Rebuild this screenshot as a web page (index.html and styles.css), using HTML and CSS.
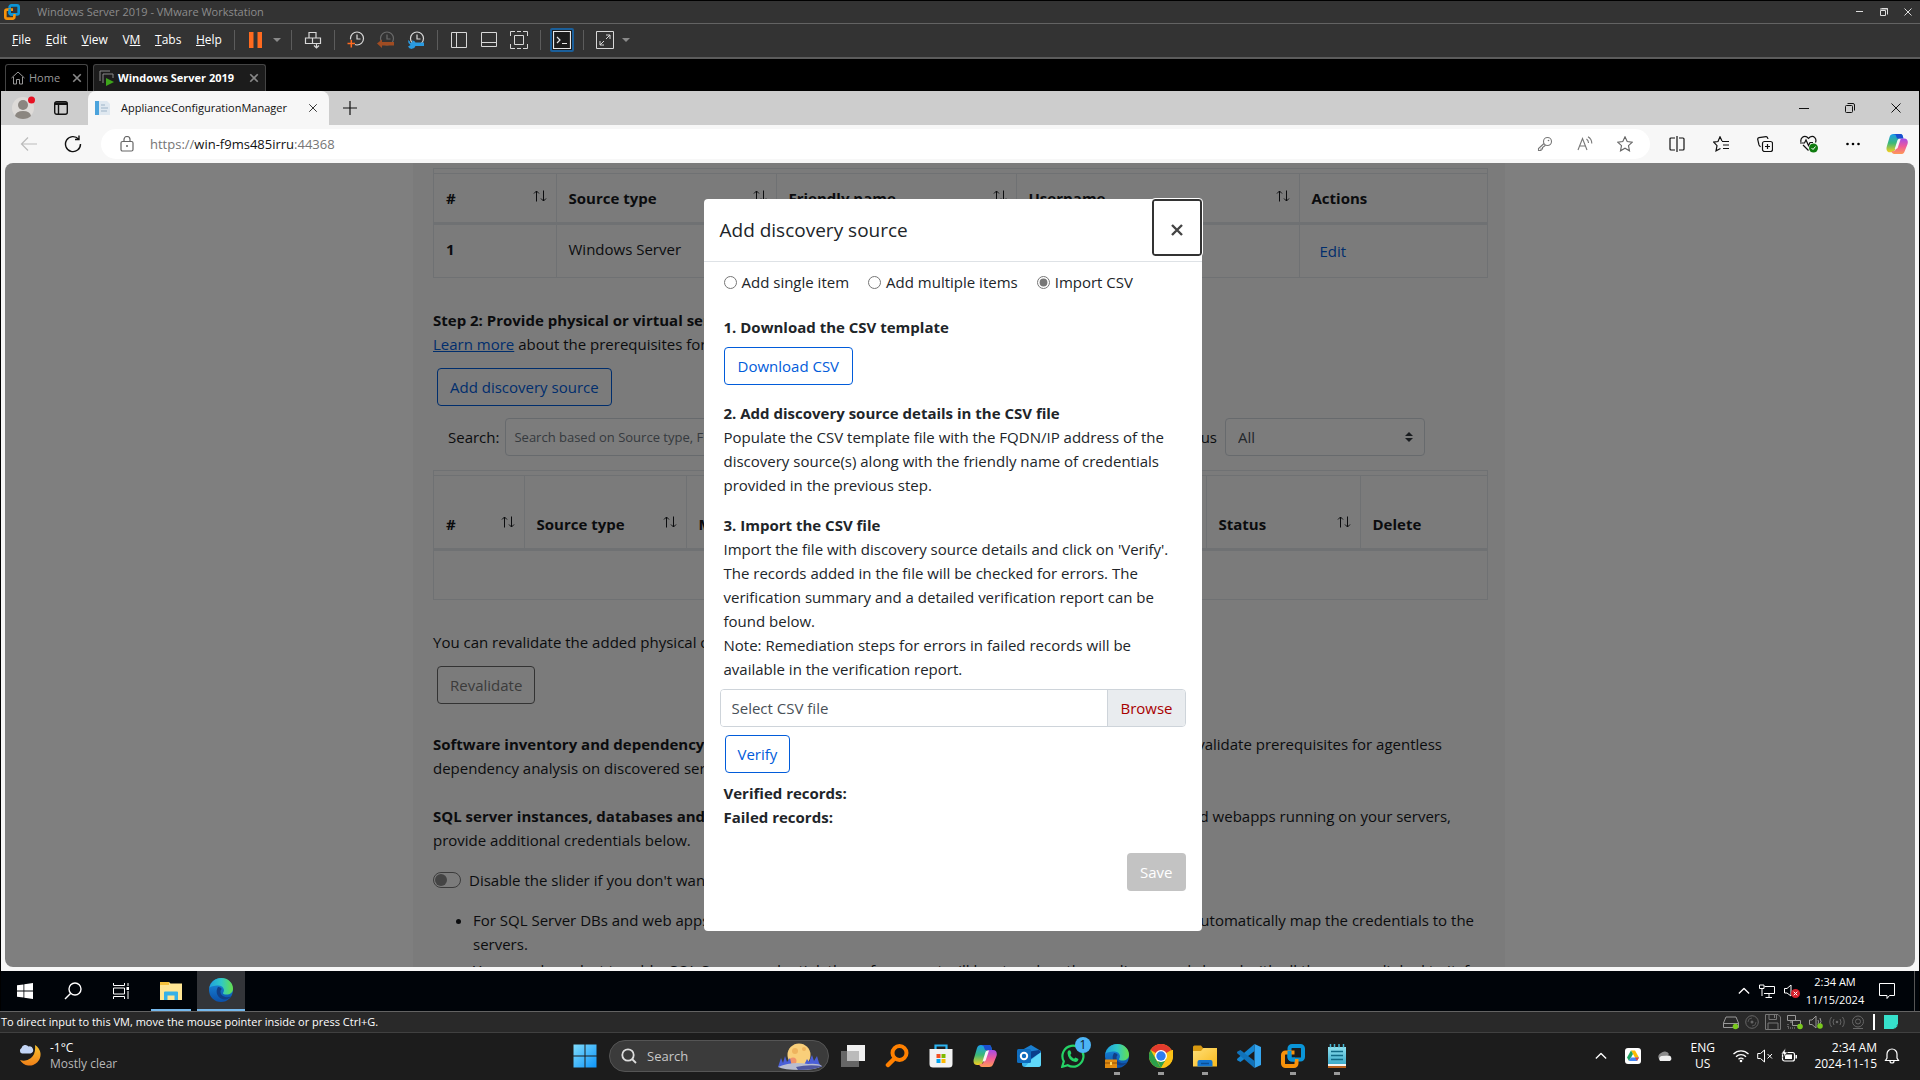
FILE: index.html
```html
<!DOCTYPE html>
<html lang="en">
<head>
<meta charset="utf-8">
<title>Windows Server 2019 - VMware Workstation</title>
<link rel="stylesheet" href="styles.css">
</head>
<body>
<svg class="defs" aria-hidden="true">
  <defs>
    <linearGradient id="edge-a" x1="0" y1="0" x2="1" y2="0"><stop offset="0" stop-color="#1fa0dc"/><stop offset=".5" stop-color="#2fc8c8"/><stop offset="1" stop-color="#66e04a"/></linearGradient>
    <linearGradient id="edge-b" x1="0" y1="0" x2="0" y2="1"><stop offset="0" stop-color="#1b8fe0"/><stop offset="1" stop-color="#0b4fa8"/></linearGradient>
    <linearGradient id="cop-a" x1="0" y1="0" x2="0" y2="1"><stop offset="0" stop-color="#1a9df0"/><stop offset=".5" stop-color="#3cb878"/><stop offset="1" stop-color="#f5d020"/></linearGradient>
    <linearGradient id="cop-b" x1="0" y1="0" x2="0" y2="1"><stop offset="0" stop-color="#a44be8"/><stop offset=".5" stop-color="#ee5a9a"/><stop offset="1" stop-color="#ff9a56"/></linearGradient>
    <linearGradient id="win" x1="0" y1="0" x2="1" y2="1"><stop offset="0" stop-color="#7fdcfc"/><stop offset="1" stop-color="#0d94f8"/></linearGradient>
    <linearGradient id="moon" x1="0" y1="0" x2="0" y2="1"><stop offset="0" stop-color="#f9c32e"/><stop offset="1" stop-color="#f08018"/></linearGradient>
    <linearGradient id="folder" x1="0" y1="0" x2="1" y2="1"><stop offset="0" stop-color="#ffdf78"/><stop offset="1" stop-color="#f8b91c"/></linearGradient>
    <linearGradient id="note" x1="0" y1="0" x2="0" y2="1"><stop offset="0" stop-color="#8fe0ee"/><stop offset="1" stop-color="#38a8c8"/></linearGradient>
    <symbol id="sort" viewBox="0 0 14 12"><path d="M3.500 11.500V1M1 3.500L3.500 1L6 3.500M10.500 .5V11M8 8.500L10.500 11L13 8.500" fill="none" stroke="currentColor"/></symbol>
    <symbol id="vmware" viewBox="0 0 24 24"><rect x="8.500" y="2" width="13.500" height="13.500" rx="2.500" fill="none" stroke="#0a95d8" stroke-width="4"/><path d="M13.500 8.500H4.500A2.500 2.500 0 0 0 2 11V19.500A2.500 2.500 0 0 0 4.500 22H13A2.500 2.500 0 0 0 15.500 19.500V15" fill="none" stroke="#f8920a" stroke-width="4"/><path d="M8.500 7V13A2.500 2.500 0 0 0 11 15.500H14" fill="none" stroke="#0a95d8" stroke-width="4"/></symbol>
    <symbol id="edge" viewBox="0 0 24 24"><circle cx="12" cy="12" r="12" fill="url(#edge-b)"/><path d="M.3 10C1.500 4 6.500 0 12.500 0C19 0 24 5 24 10.500C24 14.500 21 16.500 17.500 16.500C15 16.500 13.500 15.800 14 15C16.500 12 14 7.500 9.500 7.500C5 7.500 1.200 8.500.3 10Z" fill="url(#edge-a)"/><path d="M9 9C6.500 12.500 7.500 18 12 20.500C16 22.500 20 21 22 18.500C19 20 12 19.500 11.500 14C11.400 12.500 12 11.500 12.800 11C12 9.500 10.500 8.800 9 9Z" fill="#123f86"/></symbol>
    <symbol id="copilot" viewBox="0 0 24 24"><path d="M8 1H16C17.500 1 18 2 18.500 4L19 6H14L10 18C9.300 20 8 21 6 21H4C1 21 0 18 .8 15L4 4C4.600 2 6 1 8 1Z" fill="url(#cop-a)"/><path d="M8 1H16C17.500 1 18 2 18.500 4L19 6H12L10.500 2Z" fill="#1b4fd0"/><path d="M14.500 6H20C23 6 24.500 8.500 23.500 12L20.500 19.500C19.600 22 18.500 23 16 23H9C7.500 23 6.500 22 6 20H8C9.500 20 10.300 19 11 17L14.500 6Z" fill="url(#cop-b)"/><path d="M14.500 6.500H16L12.800 16C12.500 17 11.500 17.500 9.500 17.500L12.500 8Q13 6.500 14.500 6.500Z" fill="#f6f6f6"/></symbol>
    <symbol id="clock" viewBox="0 0 18 18"><circle cx="10" cy="7.500" r="6.500" fill="none" stroke="currentColor" stroke-width="1.200"/><path d="M10 3.500V8H13.500" fill="none" stroke="currentColor" stroke-width="1.200"/></symbol>
    <symbol id="cross" viewBox="0 0 12 12"><path d="M1.500 1.500L10.500 10.500M10.500 1.500L1.500 10.500" fill="none" stroke="currentColor"/></symbol>
    <symbol id="crossbold" viewBox="0 0 12 12"><path d="M1.500 1.500L10.500 10.500M10.500 1.500L1.500 10.500" fill="none" stroke="currentColor" stroke-width="2"/></symbol>
    <symbol id="chev" viewBox="0 0 14 8"><path d="M1 7L7 1L13 7" fill="none" stroke="currentColor" stroke-width="1.500"/></symbol>
  </defs>
</svg>

<header class="titlebar">
  <svg class="i16" viewBox="0 0 24 24"><use href="#vmware"/></svg>
  <span class="titlebar-text">Windows Server 2019 - VMware Workstation</span>
  <button aria-label="Minimize"><svg class="i8" viewBox="0 0 8 8"><path d="M0 3.500H7" stroke="#ddd"/></svg></button>
  <button aria-label="Restore"><svg class="i8" viewBox="0 0 8 8"><path d="M.5 2.500H5.500V7.500H.5ZM1.500 .5H7.500V6.500" fill="none" stroke="#ddd"/><path d="M0 1H8" stroke="#ddd"/></svg></button>
  <button aria-label="Close"><svg class="i8" viewBox="0 0 8 8"><path d="M.5 .5L7.500 7.500M7.500 .5L.5 7.500" stroke="#ddd"/></svg></button>
</header>

<div class="menubar">
  <nav class="menus">
    <a href="#"><u>F</u>ile</a><a href="#"><u>E</u>dit</a><a href="#"><u>V</u>iew</a><a href="#">V<u>M</u></a><a href="#"><u>T</u>abs</a><a href="#"><u>H</u>elp</a>
  </nav>
  <div class="tools">
    <button aria-label="Suspend"><svg class="i18" viewBox="0 0 18 18"><path d="M2 1H6.500V17H2ZM10.500 1H15V17H10.500Z" fill="#ff6a1f"/></svg></button>
    <button class="narrow" aria-label="Power menu"><svg class="i8" viewBox="0 0 8 8"><path d="M0 2H8L4 6Z" fill="#8a8a8a"/></svg></button>
  </div>
  <div class="tools">
    <button aria-label="Send Ctrl+Alt+Del"><svg class="i18" viewBox="0 0 18 18"><path d="M5 1.500H12V7H5ZM1.500 7H8.500V12.500H1.500ZM8.500 7H16.500V12.500H8.500ZM12.500 12.500V16.500M10 14.500L12.500 17L15 14.500" fill="none" stroke="#d8d8d8" stroke-width="1.200"/></svg></button>
  </div>
  <div class="tools">
    <button aria-label="Take snapshot"><svg class="i18 light" viewBox="0 0 18 18"><use href="#clock"/><path d="M1 12H8M4.500 8.500V16" stroke="#333" stroke-width="4"/><path d="M.5 12.500H8M4.300 9V16.500" stroke="#ff6a1f" stroke-width="1.500"/></svg></button>
    <button aria-label="Revert snapshot"><svg class="i18 faint" viewBox="0 0 18 18"><use href="#clock"/><path d="M0 12.500L5 8.500V11H17V14.500H5V17Z" fill="#a04c22"/></svg></button>
    <button aria-label="Manage snapshots"><svg class="i18 light" viewBox="0 0 18 18"><use href="#clock"/><path d="M1 9L3 10.500V12L5.500 11L5 9.500A3.500 3.500 0 0 1 8.500 11.500H17V15H8.500A4 4 0 0 1 1 15.500L3.500 14L1.500 12Z" fill="#2a9ae0"/></svg></button>
  </div>
  <div class="tools">
    <button aria-label="Show library"><svg class="i18" viewBox="0 0 18 18"><path d="M1.500 1.500H16.500V16.500H1.500ZM6.500 1.500V16.500" fill="none" stroke="#d8d8d8"/></svg></button>
    <button aria-label="Show thumbnail bar"><svg class="i18" viewBox="0 0 18 18"><path d="M1.500 1.500H16.500V15.500H1.500ZM1.500 11.500H16.500" fill="none" stroke="#d8d8d8"/></svg></button>
    <button aria-label="Full screen"><svg class="i18" viewBox="0 0 18 18"><path d="M4.500 4.500H13.500V13.500H4.500ZM.5 5V.5H5M7 .5H11M13 .5H17.500V5M17.500 13V17.500H13M11 17.500H7M5 17.500H.5V13" fill="none" stroke="#d8d8d8"/></svg></button>
  </div>
  <div class="tools">
    <button class="active" aria-label="Console view"><svg class="i18" viewBox="0 0 18 18"><path d="M.5 .5H17.500V17.500H.5ZM4 6L7 9L4 12M9 12.500H14" fill="none" stroke="#e8e8e8" stroke-width="1.200"/></svg></button>
  </div>
  <div class="tools">
    <button aria-label="Stretch guest"><svg class="i18" viewBox="0 0 18 18"><path d="M.5 .5H17.500V17.500H.5ZM10 4H14V8M14 4L10 8M4 10V14H8M4 14L8 10" fill="none" stroke="#d8d8d8"/></svg></button>
    <button class="narrow" aria-label="Stretch menu"><svg class="i8" viewBox="0 0 8 8"><path d="M0 2H8L4 6Z" fill="#8a8a8a"/></svg></button>
  </div>
</div>

<div class="vmtabs">
  <div class="vmtab home"><svg class="i14" viewBox="0 0 14 14"><path d="M.5 7L7 1L13.500 7M2.500 6V13H5.500V8.500H8.500V13H11.500V6" fill="none" stroke="#999"/></svg><span>Home</span><button aria-label="Close Home"><svg class="i10" viewBox="0 0 12 12"><use href="#crossbold"/></svg></button></div>
  <div class="vmtab current"><svg class="i16" viewBox="0 0 16 16"><path d="M1 11V1H11M4 13V4H14V8" fill="none" stroke="#888"/><path d="M7 8L15 12L7 16Z" fill="#3ea61b"/></svg><span>Windows Server 2019</span><button aria-label="Close tab"><svg class="i10" viewBox="0 0 12 12"><use href="#crossbold"/></svg></button></div>
</div>

<div class="guest">
  <div class="etabs">
    <button class="profile" aria-label="Profile"><svg class="i24" viewBox="0 0 24 24"><circle cx="12" cy="12" r="11" fill="#dedbd8"/><circle cx="12" cy="9" r="5" fill="#8b8680"/><path d="M4 20Q5 15 12 15T20 20Q17 23 12 23T4 20Z" fill="#8b8680"/><circle cx="20.500" cy="4" r="3.500" fill="#e81123"/></svg></button>
    <button class="workspace" aria-label="Tab actions"><svg class="i14" viewBox="0 0 14 14"><rect x=".7" y=".7" width="12.600" height="12.600" rx="2" fill="none" stroke="#111" stroke-width="1.400"/><path d="M1 2.500H13M4.500 3V13" stroke="#111" stroke-width="1.400"/><path d="M1 1.500H13V4H1Z" fill="#111"/></svg></button>
    <div class="etab"><svg class="i16" viewBox="0 0 16 16"><path d="M0 1H4V15H0Z" fill="#4ba3dc"/><path d="M4 1H12L15 4V15H4Z" fill="#dfe8f0"/><path d="M6 5H10M6 8H13M6 11H12" stroke="#9db4c8"/></svg><span>ApplianceConfigurationManager</span><button aria-label="Close tab"><svg class="i10" viewBox="0 0 12 12"><use href="#cross"/></svg></button></div>
    <button class="newtab" aria-label="New tab"><svg class="i14" viewBox="0 0 14 14"><path d="M7 0V14M0 7H14" stroke="#111" stroke-width="1.200"/></svg></button>
    <span class="grow"></span>
    <button class="ewin" aria-label="Minimize"><svg class="i10" viewBox="0 0 10 10"><path d="M0 5.500H10" stroke="#111"/></svg></button>
    <button class="ewin" aria-label="Restore"><svg class="i10" viewBox="0 0 10 10"><rect x=".5" y="2.500" width="7" height="7" rx="1" fill="none" stroke="#111"/><path d="M2.500 .5H8Q9.500 .5 9.500 2V7.500" fill="none" stroke="#111"/></svg></button>
    <button class="ewin" aria-label="Close"><svg class="i12" viewBox="0 0 12 12"><use href="#cross"/></svg></button>
  </div>
  <div class="address">
    <button class="nav faded" aria-label="Back"><svg class="i18" viewBox="0 0 18 18"><path d="M17 9H1.500M8 2.500L1.500 9L8 15.500" fill="none" stroke="currentColor" stroke-width="1.200"/></svg></button>
    <button class="nav" aria-label="Refresh"><svg class="i18" viewBox="0 0 18 18"><path d="M14.500 4A7.500 7.500 0 1 0 16.500 9M15 .5V4.500H11" fill="none" stroke="#111" stroke-width="1.400"/></svg></button>
    <div class="pill">
      <svg class="i16" viewBox="0 0 16 16"><rect x="2" y="5.500" width="12" height="9.500" rx="1.500" fill="none" stroke="#666" stroke-width="1.200"/><path d="M5 5V3.500A3 3 0 0 1 11 3.500V5" fill="none" stroke="#666" stroke-width="1.200"/><circle cx="8" cy="10" r="1" fill="#666"/></svg>
      <span class="url">https://<b>win-f9ms485irru</b>:44368</span>
      <button aria-label="Passwords"><svg class="i16" viewBox="0 0 16 16"><circle cx="10.500" cy="5.500" r="4" fill="none" stroke="#777" stroke-width="1.100"/><path d="M7 7.500L1.500 12.500V14.500H4V13H5.500V11.500L8.500 9.200" fill="none" stroke="#777" stroke-width="1.100"/><circle cx="11.500" cy="4.500" r=".8" fill="#777"/></svg></button>
      <button aria-label="Read aloud"><svg class="i16" viewBox="0 0 16 16"><path d="M1 14L5.500 2.500L10 14M2.700 10H8.300M9.500 3Q11.500 4.500 11.500 7M11 .8Q14.800 3 14.800 7.500" fill="none" stroke="#777" stroke-width="1.100"/></svg></button>
      <button aria-label="Favorite"><svg class="i16" viewBox="0 0 16 16"><path d="M8 .8L10.200 5.500L15.300 6.100L11.500 9.600L12.500 14.800L8 12.200L3.500 14.800L4.500 9.600L.7 6.100L5.800 5.500Z" fill="none" stroke="#666" stroke-width="1.100"/></svg></button>
    </div>
    <div class="etools">
      <button aria-label="Split screen"><svg class="i16" viewBox="0 0 16 16"><path d="M6 2H2Q1 2 1 3V13Q1 14 2 14H6M10 2H14Q15 2 15 3V13Q15 14 14 14H10M8 0V16" fill="none" stroke="#111" stroke-width="1.200"/></svg></button>
      <button aria-label="Favorites"><svg class="i16" viewBox="0 0 16 16"><path d="M9 5L7 .8L5 5.500L.7 6.100L4 9.600L3 14.800L7.500 12.500M9 5.500H16M10 9H16M10 12.500H16" fill="none" stroke="#111" stroke-width="1.200"/></svg></button>
      <button aria-label="Collections"><svg class="i16" viewBox="0 0 16 16"><rect x="5.500" y="5.500" width="10" height="10" rx="2" fill="none" stroke="#111" stroke-width="1.200"/><path d="M10.500 8V13M8 10.500H13M3.500 11L2 9L.7 3.500Q.5 2 2 1.600L9 .6Q10.500 .5 11 3" fill="none" stroke="#111" stroke-width="1.200"/></svg></button>
      <button aria-label="Browser essentials"><svg class="i18" viewBox="0 0 18 18"><path d="M1 7C0 3 4 0 7 2L8.500 3.500L10 2C14 0 17 4 15.500 7.500M0 8H4.500L6 5L8.500 10.500L10 7.500H13M3 10L8.500 15.500" fill="none" stroke="#111" stroke-width="1.200"/><circle cx="13.500" cy="13" r="4.500" fill="#107c10"/><path d="M11.500 13L13 14.500L15.500 11.500" fill="none" stroke="#fff"/></svg></button>
      <button aria-label="Settings and more"><svg class="i16" viewBox="0 0 16 16"><circle cx="2.500" cy="8" r="1.300"/><circle cx="8" cy="8" r="1.300"/><circle cx="13.500" cy="8" r="1.300"/></svg></button>
      <button aria-label="Copilot"><svg class="i22" viewBox="0 0 24 24"><use href="#copilot"/></svg></button>
    </div>
  </div>

  <div class="viewport">
    <main class="page">
      <div class="tablewrap">
        <table class="creds">
          <colgroup><col class="c1"><col class="c2"><col class="c3"><col class="c4"><col></colgroup>
          <thead><tr>
            <th><div class="th">#<svg class="sort"><use href="#sort"/></svg></div></th>
            <th><div class="th">Source type<svg class="sort"><use href="#sort"/></svg></div></th>
            <th><div class="th">Friendly name<svg class="sort"><use href="#sort"/></svg></div></th>
            <th><div class="th">Username<svg class="sort"><use href="#sort"/></svg></div></th>
            <th><div class="th">Actions</div></th>
          </tr></thead>
          <tbody><tr><td><b>1</b></td><td>Windows Server</td><td></td><td></td><td class="action"><a href="#">Edit</a></td></tr></tbody>
        </table>
      </div>
      <p class="step"><b>Step 2: Provide physical or virtual server details</b><br><a class="learn" href="#">Learn more</a> about the prerequisites for discovery.</p>
      <button class="btn inset">Add discovery source</button>
      <div class="filters">
        <label for="search">Search:</label>
        <input id="search" class="field search" type="text" placeholder="Search based on Source type, Friendly name">
        <label class="status-label" for="status">Status</label>
        <span class="selectbox"><select id="status" class="field"><option>All</option></select><svg viewBox="0 0 8 10"><path d="M0 4L4 0L8 4ZM0 6H8L4 10Z" fill="#343a40"/></svg></span>
      </div>
      <div class="tablewrap">
        <table class="sources">
          <colgroup><col class="s1"><col class="s2"><col><col class="s4"><col class="s5"></colgroup>
          <thead><tr>
            <th><div class="th">#<svg class="sort"><use href="#sort"/></svg></div></th>
            <th><div class="th">Source type<svg class="sort"><use href="#sort"/></svg></div></th>
            <th><div class="th">Map</div></th>
            <th><div class="th">Status<svg class="sort"><use href="#sort"/></svg></div></th>
            <th><div class="th">Delete</div></th>
          </tr></thead>
          <tbody><tr><td colspan="5"></td></tr></tbody>
        </table>
      </div>
      <p class="revalidate">You can revalidate the added physical or virtual servers.</p>
      <button class="btn inset" disabled>Revalidate</button>
      <div class="para first"><div class="split a"><b>Software inventory and dependency analysis:</b><span>validate prerequisites for agentless</span></div>dependency analysis on discovered servers.</div>
      <div class="para"><div class="split b"><b>SQL server instances, databases and webapps:</b><span>and webapps running on your servers,</span></div>provide additional credentials below.</div>
      <div class="slider"><input id="slider" type="checkbox" role="switch"><label for="slider">Disable the slider if you don't want to</label></div>
      <ul>
        <li><div class="split c"><span>For SQL Server DBs and web apps</span><span>automatically map the credentials to the</span></div>servers.</li>
        <li>You can also select to add a SQL Server credential; the safe account will be stored on the appliance and shared with all the servers linked to it, for the whole scale of it.</li>
      </ul>
    </main>

    <div class="backdrop">
      <section class="modal" role="dialog" aria-labelledby="modal-title">
        <div class="modal-head"><h1 id="modal-title">Add discovery source</h1><button class="close" aria-label="Close"><svg class="i14" viewBox="0 0 14 14"><path d="M2 2L12 12M12 2L2 12" stroke="#444" stroke-width="2.400"/></svg></button></div>
        <div class="modal-body">
          <div class="radios">
            <label><input type="radio" name="mode">Add single item</label>
            <label><input type="radio" name="mode">Add multiple items</label>
            <label><input type="radio" name="mode" checked>Import CSV</label>
          </div>
          <h2>1. Download the CSV template</h2>
          <button class="btn download">Download CSV</button>
          <h2>2. Add discovery source details in the CSV file</h2>
          <p>Populate the CSV template file with the FQDN/IP address of the discovery source(s) along with the friendly name of credentials provided in the previous step.</p>
          <h2>3. Import the CSV file</h2>
          <p>Import the file with discovery source details and click on 'Verify'. The records added in the file will be checked for errors. The verification summary and a detailed verification report can be found below.<br>Note: Remediation steps for errors in failed records will be available in the verification report.</p>
          <div class="file"><input type="text" aria-label="CSV file" value="Select CSV file" readonly><button>Browse</button></div>
          <button class="btn verify">Verify</button>
          <p class="records"><b>Verified records:</b><br><b>Failed records:</b></p>
          <button class="save" disabled>Save</button>
        </div>
      </section>
    </div>
  </div>

  <div class="gtaskbar">
    <button aria-label="Start"><svg class="i16" viewBox="0 0 16 16"><path d="M0 2.300L6.500 1.400V7.500H0ZM7.300 1.300L16 0V7.500H7.300ZM0 8.500H6.500V14.600L0 13.700ZM7.300 8.500H16V16L7.300 14.700Z" fill="#fff"/></svg></button>
    <button aria-label="Search"><svg class="i18" viewBox="0 0 18 18"><circle cx="11" cy="7" r="6" fill="none" stroke="#fff" stroke-width="1.400"/><path d="M6.500 11.500L1 17" stroke="#fff" stroke-width="1.400"/></svg></button>
    <button aria-label="Task view"><svg class="i16" viewBox="0 0 16 16"><path d="M.5 0V2.500H11.500V0M.5 16V13.500H11.500V16M.5 5H11.500V11H.5ZM15 0V3M15 8V16" fill="none" stroke="#fff"/><path d="M13.500 4H16V7H13.500Z" fill="#fff"/></svg></button>
    <button class="open" aria-label="File Explorer"><svg class="i22" viewBox="0 0 22 18"><path d="M0 0H9L10.500 1.500H22V18H0Z" fill="#ffe694"/><path d="M0 0H9V3H0Z" fill="#f5c13c"/><path d="M4 18V10.500Q4 9.500 5 9.500H17Q18 9.500 18 10.500V18H14.500V13.500H7.500V18Z" fill="#35b1e8"/></svg></button>
    <button class="focused" aria-label="Edge"><svg class="i24" viewBox="0 0 24 24"><use href="#edge"/></svg></button>
    <span class="grow"></span>
    <div class="gtray">
      <svg class="i12" viewBox="0 0 14 8"><use href="#chev"/></svg>
      <svg class="i16" viewBox="0 0 16 16"><path d="M.5 2V5.500H5V2ZM3 6V13M5.500 3.500H15.500V10.500H5M10 11V14M6.500 14.500H13" fill="none" stroke="#fff"/></svg>
      <svg class="i16" viewBox="0 0 16 16"><path d="M.5 5.500H3L7 2V13L3 10H.5Z" fill="none" stroke="#fff"/><circle cx="11.500" cy="10.500" r="4.500" fill="#d8202c"/><path d="M9.700 8.700L13.300 12.300M13.300 8.700L9.700 12.300" stroke="#fff"/></svg>
    </div>
    <div class="gclock">2:34 AM<br>11/15/2024</div>
    <button class="notify" aria-label="Notifications"><svg class="i16" viewBox="0 0 16 16"><path d="M.5 .5H15.500V12.500H10.500L8 15.500V12.500H.5Z" fill="none" stroke="#fff"/></svg></button>
    <span class="peek"></span>
  </div>
</div>

<div class="statusbar">
  <span>To direct input to this VM, move the mouse pointer inside or press Ctrl+G.</span>
  <div class="devices">
    <svg class="i16" viewBox="0 0 16 16"><path d="M3 3H13L15.500 9V13.500H.5V9ZM.5 9.500H15" fill="none" stroke="#999"/><circle cx="12.500" cy="12.500" r="2.800" fill="#7ac81e"/></svg>
    <svg class="i14" viewBox="0 0 14 14"><circle cx="7" cy="7" r="6.300" fill="none" stroke="#666"/><circle cx="7" cy="7" r="1.500" fill="#666"/><path d="M3 7A4 4 0 0 1 7 3M11 7A4 4 0 0 1 7 11" fill="none" stroke="#555"/></svg>
    <svg class="i16" viewBox="0 0 16 16"><path d="M.5 .5H13L15.500 3V15.500H.5ZM4 .5V5.500H11.500V.5M3 15V9H13V15M9.500 1V4" fill="none" stroke="#777"/></svg>
    <svg class="i16" viewBox="0 0 16 16"><path d="M.5 1.500H8.500V6.500H.5ZM5.500 6.500H13.500V11.500H5.500ZM4 6.500V9" fill="none" stroke="#999"/><path d="M1 10V14H9" fill="none" stroke="#999" stroke-dasharray="1 1"/><circle cx="13" cy="12.500" r="2.800" fill="#7ac81e"/></svg>
    <svg class="i14" viewBox="0 0 14 14"><path d="M.5 5H3L7 1V13L3 9.500H.5ZM9 5Q10 7 9 9M11 3Q13 7 11 9" fill="none" stroke="#999"/><circle cx="11" cy="11" r="2.800" fill="#7ac81e"/></svg>
    <svg class="i16" viewBox="0 0 16 16"><circle cx="8" cy="8" r="1.300" fill="#666"/><path d="M5 5Q3 8 5 11M11 5Q13 8 11 11M2.500 3Q-1 8 2.500 13M13.500 3Q17 8 13.500 13" fill="none" stroke="#666"/></svg>
    <svg class="i14" viewBox="0 0 14 14"><circle cx="7" cy="6.500" r="5.500" fill="none" stroke="#666"/><circle cx="7" cy="6.500" r="2.500" fill="none" stroke="#666"/><path d="M2 13.500H12" stroke="#666"/></svg>
    <i class="bar"></i>
    <svg class="i14" viewBox="0 0 14 14"><path d="M0 0H14V9L9.500 14H0Z" fill="#36e0cb"/><path d="M14 10.500H10.500V14Z" fill="#36e0cb"/></svg>
  </div>
</div>

<footer class="taskbar">
  <button class="weather"><svg class="i24" viewBox="0 0 24 24"><path d="M17 1A11 11 0 1 1 2 16Q8 18 13 14T17 1Z" fill="url(#moon)"/><path d="M4 9.500A3 3 0 0 1 3.500 4A4 4 0 0 1 10.500 2.500A3.500 3.500 0 0 1 12.500 9.500Z" fill="#c3d5f5"/></svg><span>-1°C<br><span class="dim">Mostly clear</span></span></button>
  <div class="apps">
    <button aria-label="Start"><svg class="i24" viewBox="0 0 24 24"><path d="M.5 .5H11.500V11.500H.5ZM12.500 .5H23.500V11.500H12.500ZM.5 12.500H11.500V23.500H.5ZM12.500 12.500H23.500V23.500H12.500Z" fill="url(#win)"/></svg></button>
    <div class="searchpill"><svg class="i16" viewBox="0 0 16 16"><circle cx="7" cy="7" r="5.700" fill="none" stroke="#ddd" stroke-width="1.800"/><path d="M11 11L15 15" stroke="#ddd" stroke-width="1.800"/></svg><input type="text" aria-label="Search" placeholder="Search"><svg class="moonart" viewBox="0 0 44 27"><circle cx="21" cy="12" r="11.500" fill="#f9cf7a"/><circle cx="17" cy="8" r="3" fill="#eeb45e"/><circle cx="26" cy="6" r="2" fill="#eeb45e"/><circle cx="15" cy="18" r="3.500" fill="#f0946a"/><path d="M0 24L3 15L5 20L7 13L9 19L12 15L14 24ZM26 22L29 16L31 19L34 12L36 18L39 13L41 20L44 24Z" fill="#4a5fd8"/><path d="M0 24Q14 18 30 21Q40 20 44 23Q38 27 22 27Q6 27 0 24Z" fill="#b9bdd0"/><path d="M18 24Q30 21 44 23Q38 27 20 27Z" fill="#4f57a0"/></svg></div>
    <button aria-label="Task view"><svg class="i24" viewBox="0 0 24 24"><path d="M6 1H24V17H6Z" fill="#f0f0f0"/><path d="M0 7H18V23H0Z" fill="#666"/><path d="M6 7H18V17H6Z" fill="#bbb"/></svg></button>
    <button aria-label="Everything"><svg class="i24" viewBox="0 0 24 24"><circle cx="14.500" cy="9" r="7" fill="none" stroke="#ff8000" stroke-width="4"/><path d="M9.500 14.500L3 21" stroke="#ff8000" stroke-width="4.500" stroke-linecap="round"/></svg></button>
    <button aria-label="Microsoft Store"><svg class="i24" viewBox="0 0 24 24"><path d="M6.500 6V1.500H17.500V6" fill="none" stroke="#2cb4f0" stroke-width="2.200"/><path d="M.5 5H23.500V20Q23.500 23.500 20 23.500H4Q.5 23.500 .5 20Z" fill="#f2f2f2"/><path d="M7.500 10H11.500V14H7.500Z" fill="#f25022"/><path d="M12.500 10H16.500V14H12.500Z" fill="#7fba00"/><path d="M7.500 15H11.500V19H7.500Z" fill="#00a4ef"/><path d="M12.500 15H16.500V19H12.500Z" fill="#ffb900"/></svg></button>
    <button aria-label="Copilot"><svg class="i24" viewBox="0 0 24 24"><use href="#copilot"/></svg></button>
    <button aria-label="Outlook"><svg class="i24" viewBox="0 0 24 24"><path d="M5 6L14 1L24 7V12H5Z" fill="#1a7fd0"/><path d="M5 9L24 10V20Q24 23 21 23H8Q5 23 5 20Z" fill="#38b6f0"/><path d="M14 16L24 8V20Q24 23 21 23H8Z" fill="#5fd8fa"/><path d="M10 8L22 6L24 8L14 15Z" fill="#0a3f8c"/><rect y="5" width="14" height="14" rx="1.500" fill="#0f6cbd"/><circle cx="7" cy="12" r="3.200" fill="none" stroke="#fff" stroke-width="2"/></svg></button>
    <button class="badge-host" aria-label="WhatsApp"><svg class="i24" viewBox="0 0 24 24"><path d="M1.200 22.800L2.800 17.300A10.500 10.500 0 1 1 6.800 21.300Z" fill="none" stroke="#25d366" stroke-width="2.200"/><path d="M7.500 6.500Q9.500 5.500 10 8L10.300 9.500L9.300 11Q10.500 13.500 13 14.800L14.500 13.500L17.500 15Q17 18 14.500 18Q7 16.500 6.500 9Q6.500 7 7.500 6.500Z" fill="#25d366"/></svg><span class="badge">1</span></button>
    <button class="run" aria-label="Edge"><svg class="i24" viewBox="0 0 24 24"><use href="#edge"/><rect y="15.500" width="12" height="8.500" fill="#e08a10"/><path d="M0 19H12" stroke="#8c4f04"/><path d="M5 18H7V21H5Z" fill="#ffd75a"/></svg></button>
    <button class="run" aria-label="Chrome"><svg class="i24" viewBox="0 0 24 24"><circle cx="12" cy="12" r="12" fill="#fbc116"/><path d="M12 12L1.600 6A12 12 0 0 1 22.400 6Z" fill="#e33b2e"/><path d="M1.600 6L12 24A12 12 0 0 1 1.600 6Z" fill="#2da04a"/><path d="M12 24L6 12L12 12L17.500 15Z" fill="#2da04a"/><path d="M12 24L17.800 14V12H22.400V6H24V12A12 12 0 0 1 12 24Z" fill="#fbc116"/><circle cx="12" cy="12" r="6" fill="#fff"/><circle cx="12" cy="12" r="4.700" fill="#2f7cf0"/></svg></button>
    <button class="run" aria-label="File Explorer"><svg class="i24" viewBox="0 0 24 24"><path d="M0 3Q0 1.500 1.500 1.500H8L10 4H24V22H0Z" fill="#d99a10"/><path d="M0 7H8L10.500 4H24V22.500H0Z" fill="url(#folder)"/><path d="M4.500 22.500V18Q4.500 16 6.500 16H17.500Q19.500 16 19.500 18V22.500Z" fill="#1374cf"/><path d="M8 19.500H16" stroke="#0b4f94" stroke-width="1.500"/></svg></button>
    <button aria-label="Visual Studio Code"><svg class="i24" viewBox="0 0 24 24"><path d="M17.500 0L24 3V21L17.500 24Z" fill="#35a6f0"/><path d="M17.500 0V7L3.500 18L.5 16.500Q-.5 15.500 .5 14.500Z" fill="#1484d0"/><path d="M17.500 24V17L3.500 6L.5 7.500Q-.5 8.500 .5 9.500Z" fill="#1072ba"/></svg></button>
    <button class="run" aria-label="VMware Workstation"><svg class="i24" viewBox="0 0 24 24"><use href="#vmware"/></svg></button>
    <button class="run" aria-label="Notepad"><svg class="i24" viewBox="0 0 24 24"><path d="M3 3H21V21H3Z" fill="url(#note)"/><path d="M3 20H21V22H3Z" fill="#f4f4f4"/><path d="M3 22H21V24H3Z" fill="#b8601c"/><path d="M6 7.500H18M6 11.500H18M6 15.500H18" stroke="#106a86" stroke-width="1.500"/><path d="M5.500 0V3.500M9.500 0V3.500M14 0V3.500M18.500 0V3.500" stroke="#45b8d4" stroke-width="1.500"/></svg></button>
  </div>
  <div class="tray">
    <svg class="i12" viewBox="0 0 14 8"><use href="#chev"/></svg>
    <svg class="i16" viewBox="0 0 16 16"><rect width="16" height="16" rx="3" fill="#fff"/><path d="M6 2.500H10L14 9.500H10Z" fill="#fbbc04"/><path d="M6 2.500L8 6L4 13L2 9.500Z" fill="#1fa463"/><path d="M5.800 9.500H14L12 13H4Z" fill="#4285f4"/><path d="M10 9.500H14L12 13Z" fill="#ea4335"/></svg>
    <svg class="i16" viewBox="0 0 16 16"><path d="M2 11A4 4 0 0 1 4 5A5 5 0 0 1 12 6L7 12Z" fill="#8a8a8a"/><path d="M3 13A3 3 0 0 1 4.500 8L12 7.500A3 3 0 0 1 13 13Z" fill="#eee"/></svg>
    <div class="lang">ENG<br>US</div>
    <svg class="i16" viewBox="0 0 16 16"><path d="M.5 6A10.500 10.500 0 0 1 15.500 6M3 8.700A7 7 0 0 1 13 8.700M5.500 11.200A3.800 3.800 0 0 1 10.500 11.200" fill="none" stroke="#fff" stroke-width="1.300"/><circle cx="8" cy="13" r="1.300" fill="#fff"/></svg>
    <svg class="i16" viewBox="0 0 16 16"><path d="M.7 5.500H3.500L7.500 2V14L3.500 10.500H.7ZM10.500 6L15 10.500M15 6L10.500 10.500" fill="none" stroke="#fff"/></svg>
    <svg class="i16" viewBox="0 0 16 16"><rect x="1.500" y="4.500" width="12" height="8.500" rx="2" fill="none" stroke="#fff" stroke-width="1.200"/><path d="M4 6.500H11V11H4ZM14.500 7H16V10.500H14.500Z" fill="#fff"/><path d="M4.500 0L0 6H3L2 10L6.500 4H4Z" fill="#fff" stroke="#1c1c1c" stroke-width=".6"/></svg>
    <div class="clock">2:34 AM<br>2024-11-15</div>
    <svg class="i16" viewBox="0 0 16 16"><path d="M1.500 12.500L3 10V6A5 5 0 0 1 13 6V10L14.500 12.500ZM6 13A2 2 0 0 0 10 13" fill="none" stroke="#fff" stroke-width="1.200"/></svg>
  </div>
</footer>
</body>
</html>
```

FILE: styles.css
```css
*, *::before, *::after { box-sizing: border-box; }
html, body { height: 100%; }
body {
  margin: 0;
  display: flex;
  flex-direction: column;
  overflow: hidden;
  background: #000;
  color: #fff;
  font: 12px/16px "Open Sans", "Noto Sans", sans-serif;
}
button { margin: 0; padding: 0; border: 0; background: none; color: inherit; font: inherit; display: flex; align-items: center; justify-content: center; flex: none; }
a { color: inherit; text-decoration: none; }
svg { display: block; flex: none; }
p, h1, h2, ul { margin: 0; }
.defs { position: absolute; width: 0; height: 0; }
.grow { flex: 1; }
.i8 { width: 8px; height: 8px; }
.i10 { width: 10px; height: 10px; }
.i12 { width: 12px; height: 12px; }
.i14 { width: 14px; height: 14px; }
.i16 { width: 16px; height: 16px; }
.i18 { width: 18px; height: 18px; }
.i22 { width: 22px; height: 22px; }
.i24 { width: 24px; height: 24px; }

/* host window chrome */
.titlebar { flex: none; height: 24px; padding: 0 0 0 4px; display: flex; align-items: center; background: #333; border-top: 1px solid #000; border-bottom: 1px solid #636363; }
.titlebar-text { flex: 1; padding-left: 17px; font-size: 11px; color: #8c8c8c; }
.titlebar button { width: 24px; height: 22px; }
.menubar { flex: none; height: 35px; padding-bottom: 1px; display: flex; align-items: center; background: #333; border-bottom: 2px solid #5c5c5c; }
.menus { width: 234px; padding: 0 12px; display: flex; justify-content: space-between; }
.tools { display: flex; align-items: center; gap: 6px; padding: 0 9px; border-left: 1px solid #5c5c5c; height: 20px; }
.tools button { width: 24px; height: 24px; }
.tools .narrow { width: 10px; margin-left: -2px; }
.tools .active { border: 2px solid #1b5f9a; border-radius: 2px; background: #1c1c1c; }
.light { color: #d8d8d8; }
.faint { color: #6a6a6a; }
.vmtabs { flex: none; height: 32px; padding: 5px 5px 0; display: flex; gap: 5px; }
.vmtab { display: flex; align-items: center; border: 1px solid #444; border-bottom: 0; border-radius: 3px 3px 0 0; color: #999; }
.vmtab span { flex: 1; padding-left: 4px; font-size: 11px; }
.vmtab button { color: #888; }
.home { width: 83px; padding: 0 5px; }
.current { width: 173px; padding: 0 6px 0 5px; background: #1c1c1c; }
.current span { padding-left: 3px; color: #fff; font-weight: 700; }

/* guest screen */
.guest { flex: 1; min-height: 0; margin: 0 1px; display: flex; flex-direction: column; background: #f7f7f7; color: #111; }
.etabs { flex: none; height: 34px; display: flex; align-items: center; background: #cdcdcd; }
.profile { width: 44px; }
.workspace { width: 32px; }
.etab { width: 241px; height: 34px; margin-left: 11px; padding: 0 11px 0 7px; display: flex; align-items: center; border-radius: 8px 8px 0 0; background: #f7f7f7; }
.etab span { flex: 1; padding-left: 10px; font-size: 11px; }
.newtab { width: 42px; }
.ewin { width: 46px; height: 34px; }
.address { flex: none; height: 38px; display: flex; align-items: center; }
.nav { width: 44px; margin-left: 6px; }
.nav + .nav { margin-left: 0; }
.faded { color: #bbb; }
.pill { flex: 1; height: 30px; margin: 0 5px 0 6px; padding: 0 5px 0 18px; display: flex; align-items: center; border-radius: 15px; background: #fff; }
.url { flex: 1; padding-left: 15px; font-size: 13px; color: #767676; }
.url b { font-weight: 400; color: #111; }
.pill button { width: 40px; }
.etools { display: flex; align-items: center; }
.etools button { width: 44px; }
.viewport { position: relative; flex: 1; min-height: 0; margin: 0 4px 4px; padding-right: 2px; overflow: hidden; border-radius: 8px; background: #fff; font-size: 15px; line-height: 24px; }

/* configuration page */
.page { width: 1092px; max-width: 100%; height: 100%; margin: 0 auto; padding: 5px 17px 0 20px; overflow: hidden; background: #f6f6f6; color: #16191c; }
.tablewrap { border: 1px solid #dee2e6; border-bottom: 0; padding-top: 4px; }
table { width: 100%; table-layout: fixed; border-collapse: collapse; }
th, td { padding: 0 9px 0 12px; border: 1px solid #dee2e6; text-align: left; }
th { border-bottom-width: 3px; }
tr > :first-child { border-left: 0; }
tr > :last-child { border-right: 0; }
.th { display: flex; justify-content: space-between; align-items: center; }
.sort { width: 14px; height: 12px; margin-bottom: 4px; }
.creds th { height: 50px; }
.creds td { height: 54px; padding-bottom: 4px; }
.creds .action { padding: 0 9px 0 20px; color: #015cda; }
.sources th { height: 74px; padding-top: 24px; }
.sources td { height: 50px; }
.c1 { width: 122px; }
.c2 { width: 220px; }
.c3 { width: 240px; }
.c4 { width: 283px; }
.s1 { width: 90px; }
.s2 { width: 162px; }
.s4 { width: 154px; }
.s5 { width: 127px; }
.step { margin-top: 30px; }
.learn { color: #015cda; text-decoration: underline; }
.btn { height: 38px; padding: 0 12px; border: 1px solid #015cda; border-radius: 4px; color: #015cda; }
.btn:disabled { border-color: #666; color: #777; }
.inset { margin: 12px 0 0 4px; }
.filters { margin: 12px 0 14px 15px; display: flex; align-items: center; }
.field { height: 38px; border: 1px solid #ced4da; border-radius: 4px; background: #f8f8f8; color: #495057; font: inherit; }
.search { width: 400px; margin-left: 6px; padding: 0 8px; font-size: 13px; }
.search::placeholder { color: #6c757d; }
.status-label { flex: 1; text-align: right; }
.selectbox { width: 200px; margin: 0 63px 0 8px; display: grid; align-items: center; }
.selectbox > * { grid-area: 1 / 1; }
.selectbox select { appearance: none; padding: 0 12px; }
.selectbox svg { width: 8px; height: 10px; margin-right: 12px; justify-self: end; }
.revalidate { margin-top: 30px; }
.para { margin-top: 24px; }
.first { margin-top: 28px; }
.split { display: flex; justify-content: space-between; }
.a { padding-right: 46px; }
.b { padding-right: 37px; }
.c { padding-right: 14px; }
.slider { margin: 16px 0; display: flex; align-items: center; gap: 8px; }
.slider input { appearance: none; width: 28px; height: 16px; margin: 0; padding: 1px; display: flex; border: 1px solid #777; border-radius: 8px; }
.slider input::before { content: ""; width: 12px; height: 12px; border-radius: 50%; background: #888; }
ul { padding-left: 40px; }
li { margin-bottom: 2px; }

/* dialog */
.backdrop { position: absolute; inset: 0; padding: 36px 15px 0 0; background: rgba(0, 0, 0, .5); }
.modal { width: 498px; max-width: 100%; margin: 0 auto; border-radius: 4px; background: #fff; color: #212529; }
.modal-head { height: 63px; padding-left: 16px; display: flex; justify-content: space-between; border-bottom: 1px solid #dee2e6; }
h1 { align-self: center; font-size: 19px; line-height: 30px; font-weight: 500; }
.close { width: 50px; height: 57px; padding-top: 4px; border: 2px solid #333; border-radius: 3px; outline: 1px solid #fff; }
.modal-body { padding: 8px 16px 40px; }
.radios { padding-left: 4px; display: flex; gap: 19px; margin-bottom: 21px; }
.radios label { display: flex; align-items: center; gap: 5px; }
.radios input { width: 13px; height: 13px; margin: 0; accent-color: #767676; filter: grayscale(1); }
h2 { padding-left: 4px; font-size: 15px; line-height: 24px; font-weight: 700; }
.modal-body p { padding: 0 4px; }
.modal-body p + h2 { margin-top: 16px; }
.download { margin: 8px 0 16px 4px; padding: 0 13px; }
.file { margin: 8px 0; height: 38px; display: flex; border: 1px solid #ced4da; border-radius: 4px; overflow: hidden; }
.file input { flex: 1; min-width: 0; padding: 0 11px; border: 0; font: inherit; color: #495057; }
.file button { padding: 0 12px; border-left: 1px solid #ced4da; background: #e9ecef; color: #a80000; }
.verify { margin: 0 0 8px 5px; }
.save { height: 38px; margin: 24px 0 0 auto; padding: 0 13px; border-radius: 4px; background: #c3c3c3; color: #fff; }

/* guest taskbar */
.gtaskbar { flex: none; height: 40px; display: flex; align-items: center; background: #000409; color: #fff; }
.gtaskbar button { width: 48px; height: 40px; }
.gtaskbar .open { width: 52px; background: linear-gradient(#76b9ed, #76b9ed) center bottom / 40px 2px no-repeat; }
.gtaskbar .focused { background: #333539; border-bottom: 2px solid #76b9ed; }
.gtray { display: flex; align-items: center; gap: 9px; }
.gclock { margin-left: 5px; width: 60px; text-align: center; font-size: 11px; line-height: 18px; white-space: nowrap; }
.gtaskbar .notify { width: 44px; margin-right: 5px; }
.peek { width: 5px; height: 40px; border-left: 1px solid #555; }

/* host status bar and taskbar */
.statusbar { flex: none; height: 21px; padding: 0 22px 0 1px; display: flex; justify-content: space-between; align-items: center; background: #292929; border-top: 1px solid #636363; font-size: 11px; }
.devices { display: flex; align-items: center; gap: 6px; }
.bar { width: 2px; height: 16px; margin: 0 3px 0 2px; background: #fff; }
.taskbar { flex: none; height: 48px; padding-bottom: 1px; display: grid; grid-template-columns: 1fr auto 1fr; align-items: center; background: #1c1c1c; border-top: 1px solid #404040; }
.weather { padding-left: 18px; gap: 8px; justify-self: start; text-align: left; }
.dim { color: #b8b8b8; }
.apps { padding-left: 2px; display: flex; align-items: center; }
.apps button { width: 44px; height: 46px; }
.searchpill { width: 220px; height: 32px; margin: 0 2px; padding: 0 6px 0 11px; display: flex; align-items: center; border: 1px solid #555; border-radius: 16px; background: #3b3b3b; }
.searchpill input { flex: 1; min-width: 0; padding: 0 0 0 10px; border: 0; background: none; color: #fff; font: inherit; font-size: 13px; }
.searchpill input::placeholder { color: #c8c8c8; }
.moonart { width: 44px; height: 27px; }
.apps .run { background: radial-gradient(#9a9a9a, #9a9a9a) center 39px / 6px 3px no-repeat; }
.badge-host { position: relative; }
.badge { position: absolute; top: 4px; right: 4px; width: 16px; height: 16px; border-radius: 50%; background: #4cb4f5; color: #10222e; }
.tray { justify-self: end; padding-right: 20px; display: flex; align-items: center; }
.tray svg { margin-right: 8px; }
.tray .i12 { margin-right: 18px; }
.tray .i12 + svg { margin-right: 16px; }
.lang { margin: 0 18px 0 10px; text-align: center; }
.clock { margin: 0 7px 0 8px; width: 64px; text-align: right; white-space: nowrap; }
.tray svg:last-child { margin-right: 0; }
```
